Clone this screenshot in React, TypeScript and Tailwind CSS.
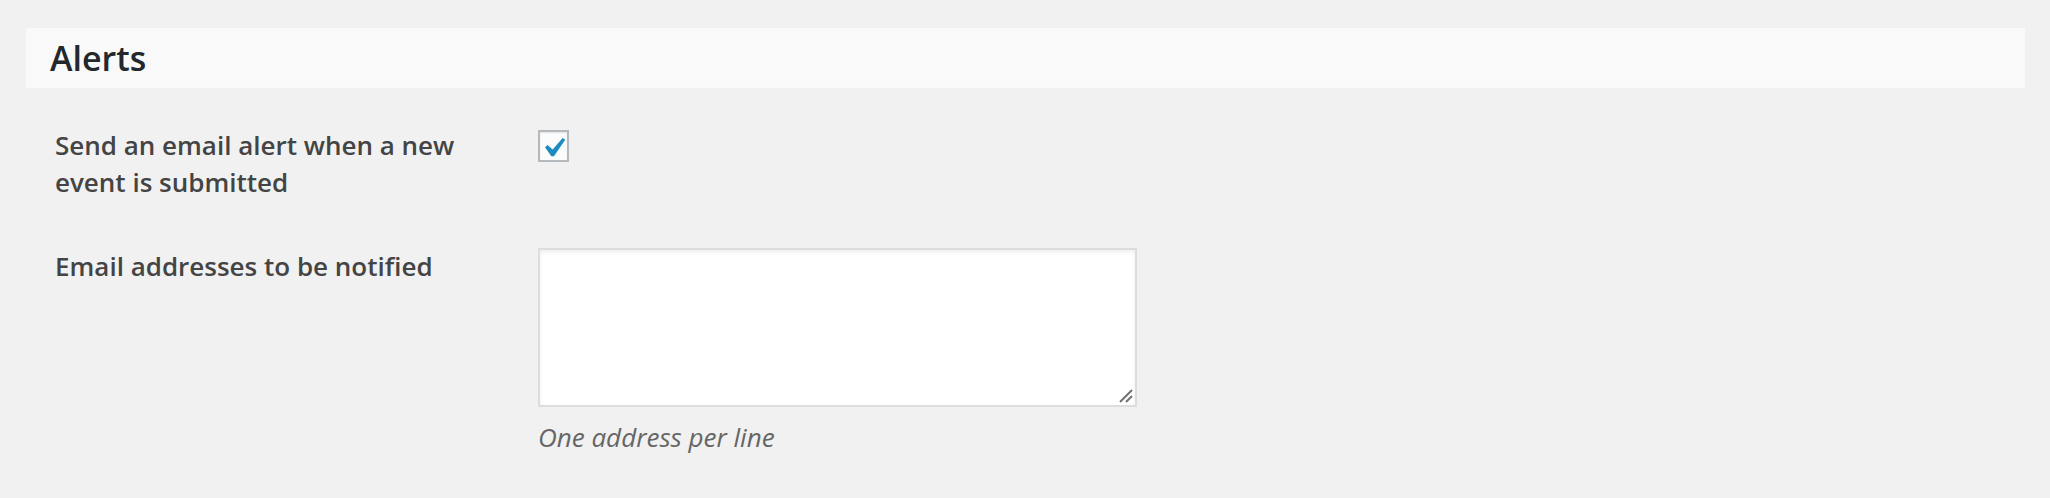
import React from "react";

export default function App() {
  return (
    <div
      className="w-[2050px] h-[498px] bg-[#f1f1f1] pt-[28px] pl-[26px] pr-[25px]"
      style={{ fontFamily: '"Open Sans", "Noto Sans", sans-serif' }}
    >
      <div className="h-[60px] bg-[#f9f9f9] flex items-center pl-[24px]">
        <h2 className="text-[34px] font-semibold text-[#23282d] leading-none">Alerts</h2>
      </div>

      <div className="pl-[29px] pt-[39px] flex flex-col gap-[47px]">
        <div className="flex">
          <div className="w-[483px] shrink-0 text-[26px] leading-[37px] font-semibold text-[#444]">
            Send an email alert when a new
            <br />
            event is submitted
          </div>
          <div className="pt-[3px]">
            <div className="w-[31px] h-[32px] border-2 border-[#b4b9be] bg-[#fcfcfc] shadow-[inset_0_1px_2px_rgba(0,0,0,0.1)]">
              <svg width="27" height="28" viewBox="0 0 27 28" className="block">
                <path
                  transform="translate(5 6) scale(1.95) translate(-5.78 -4.89)"
                  d="M14.83 4.89l1.34.94-5.81 8.38H9.02L5.78 9.67l1.34-1.25 2.57 2.4z"
                  fill="#1e8cbe"
                />
              </svg>
            </div>
          </div>
        </div>

        <div className="flex">
          <div className="w-[483px] shrink-0 text-[26px] leading-[37px] font-semibold text-[#444]">
            Email addresses to be notified
          </div>
          <div className="flex flex-col">
            <div className="relative w-[599px] h-[159px]">
              <textarea
                className="w-full h-full resize-none border-2 border-[#dddddd] bg-white shadow-[inset_0_2px_4px_rgba(0,0,0,0.07)] outline-none block"
              />
              <svg
                width="14"
                height="14"
                viewBox="0 0 14 14"
                className="absolute right-[4px] bottom-[4px]"
              >
                <line x1="1" y1="13" x2="13" y2="1" stroke="#707070" strokeWidth="2" />
                <line x1="7" y1="13" x2="13" y2="7" stroke="#707070" strokeWidth="2" />
              </svg>
            </div>
            <p className="mt-[12px] text-[26px] leading-[37px] italic text-[#666]">
              One address per line
            </p>
          </div>
        </div>
      </div>
    </div>
  );
}
